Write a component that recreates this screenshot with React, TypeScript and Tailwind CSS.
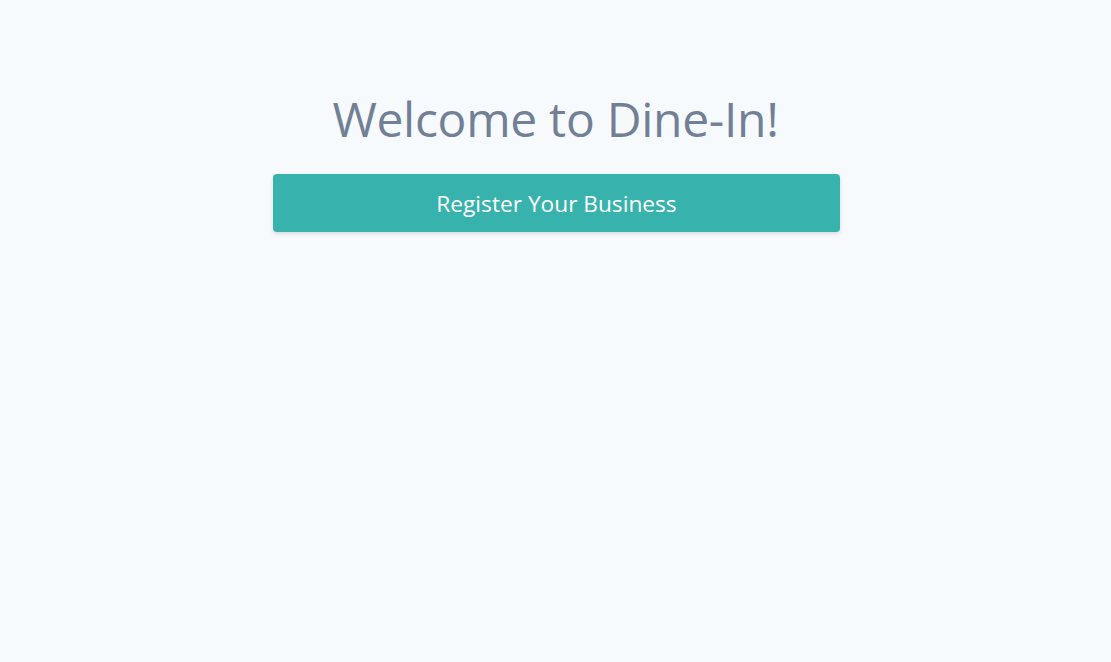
export default function App() {
  return (
    <div className="min-h-screen bg-[#f7fafc] font-['Open_Sans','Noto_Sans',sans-serif]">
      <div className="flex flex-col items-center pt-[84px]">
        <h1 className="text-[48px] leading-[70px] text-[#718096] tracking-[-0.3px]">Welcome to Dine-In!</h1>
        <button className="ml-[2px] mt-[20px] h-[58px] w-[567px] rounded-[4px] bg-[#38b2ac] pt-[2px] text-[22.7px] text-white shadow-[0_2px_4px_rgba(0,0,0,0.12)]">
          Register Your Business
        </button>
      </div>
    </div>
  );
}
